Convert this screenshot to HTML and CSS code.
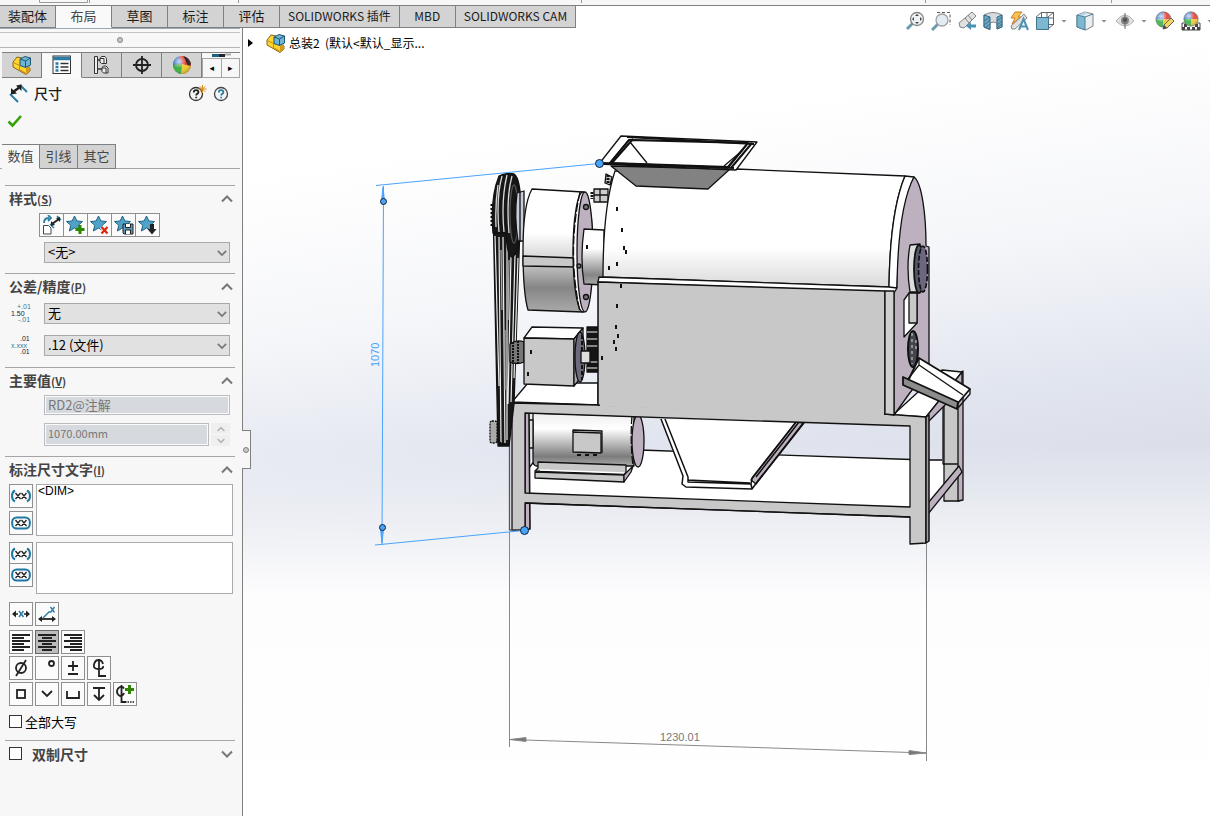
FILE: index.html
```html
<!DOCTYPE html>
<html lang="zh-CN">
<head>
<meta charset="utf-8">
<meta name="viewport" content="width=device-width, initial-scale=1">
<title>SOLIDWORKS - 总装2</title>
<link rel="stylesheet" href="styles.css">
</head>
<body>
<svg class="defs" width="0" height="0" aria-hidden="true">
  <defs>
    <symbol id="i-up" viewBox="0 0 12 8"><path d="M1 6.500 6 1.500l5 5" fill="none" stroke="#777" stroke-width="2"/></symbol>
    <symbol id="i-down" viewBox="0 0 12 8"><path d="M1 1.500 6 6.500l5-5" fill="none" stroke="#777" stroke-width="2"/></symbol>
    <symbol id="i-part" viewBox="0 0 20 20">
      <path d="M1 7l4-5 5 1v6l8 4v3l-4 3.500L1 12z" fill="#ffd42e" stroke="#8a6512"/>
      <path d="M1.500 7.500l6 3v4l6 3.500" fill="none" stroke="#c58e14"/>
      <path d="M14 13l4-2v5l-4 3z" fill="#d59a18"/>
      <path d="M8 4l5-2.500 5.500 1.500v7l-5 2.500L8 10.500z" fill="#6eb5d6" stroke="#1d5673"/>
      <path d="M8 4l5.500 2L18.500 3M13.500 6v6.500" fill="none" stroke="#1d5673"/>
    </symbol>
    <symbol id="i-star" viewBox="0 0 20 20"><path d="M8.500 1l2.400 5 5.600.5-4.200 3.800 1.300 5.700-5.100-3-5.100 3 1.300-5.700L.5 6.500 6.100 6z" fill="#4fa3c8" stroke="#1f5f80"/></symbol>
    <symbol id="i-paren" viewBox="0 0 20 20"><path d="M4 4.500Q1 6 1 10t3 5.500M16 4.500q3 1.500 3 5.500t-3 5.500" fill="none" stroke="#1f78a3" stroke-width="2"/><path d="M4.500 7l5 6m0-6l-5 6M10.500 7l5 6m0-6l-5 6" stroke="#222" stroke-width="1.300"/></symbol>
    <symbol id="i-oval" viewBox="0 0 20 20"><rect x="1.200" y="4.500" width="17.600" height="11" rx="4.500" fill="none" stroke="#1f78a3" stroke-width="2"/><path d="M4.500 7l5 6m0-6l-5 6M10.500 7l5 6m0-6l-5 6" stroke="#222" stroke-width="1.300"/></symbol>
    <radialGradient id="ballshade" cx=".35" cy=".3" r=".8"><stop offset="0" stop-color="#fff" stop-opacity=".75"/><stop offset=".5" stop-color="#fff" stop-opacity="0"/><stop offset="1" stop-color="#000" stop-opacity=".35"/></radialGradient>
    <symbol id="i-ball" viewBox="0 0 20 20">
      <path d="M10 10L1 10A9 9 0 0 1 10 1z" fill="#3874c8"/><path d="M10 10V1a9 9 0 0 1 9 9z" fill="#e23b33"/><path d="M10 10H1a9 9 0 0 0 9 9z" fill="#35b044"/><path d="M10 10h9a9 9 0 0 1-9 9z" fill="#f0c92c"/>
      <circle cx="10" cy="10" r="9" fill="url(#ballshade)" stroke="#5b5b5b" stroke-width=".7"/>
    </symbol>
  </defs>
</svg>

<div class="app">
  <div class="strip">
    <svg width="100%" height="5" aria-hidden="true"><path d="M39.500 0V2.500H87.500V0M89.500 0V3M238.500 0V3M581.500 0V3M925.500 0V3M1111.500 0V3" fill="none" stroke="#9a9a9a"/></svg>
  </div>

  <nav class="ribbon" aria-label="命令选项卡">
    <button>装配体</button><button class="on">布局</button><button>草图</button><button>标注</button><button>评估</button><button class="latin">SOLIDWORKS 插件</button><button class="latin">MBD</button><button class="latin">SOLIDWORKS CAM</button>
  </nav>

  <aside class="panel">
    <div class="grip"><span class="dot"></span></div>
    <div class="mgr">
      <button aria-label="设计树"><svg width="20" height="20"><use href="#i-part"/></svg></button>
      <button class="on" aria-label="属性"><svg width="20" height="20" viewBox="0 0 20 20"><rect x="1" y="1" width="17.500" height="17.500" fill="#fff" stroke="#333"/><path d="M1 3.500h17.500" stroke="#2b7da3" stroke-width="3.500"/><path d="M3.500 8.500h3M3.500 12h3M3.500 15.500h3" stroke="#2b7da3" stroke-width="2.400"/><path d="M8.500 8.500h8M8.500 12h8M8.500 15.500h8" stroke="#333" stroke-width="1.300"/></svg></button>
      <button aria-label="配置"><svg width="20" height="20" viewBox="0 0 20 20" fill="#eee" stroke="#333"><path d="M5 5h5M5 14h6" stroke-width="1.600"/><path d="M2.500 1.500h3v17h-3z"/><path d="M8 3.500l1.500-2H13l1.500 2v5H9.500L8 7zM10 13l1.500-2H14l2 2v5h-4.500L10 16.500z"/><path d="M8 3.500h4v5M10 13h4v5" fill="none"/></svg></button>
      <button aria-label="DimXpert"><svg width="20" height="20" viewBox="0 0 20 20" fill="none" stroke="#222" stroke-width="1.800"><circle cx="10" cy="10" r="6"/><path d="M10 1v18M1 10h18"/></svg></button>
      <button aria-label="外观"><svg width="20" height="20" viewBox="0 0 20 20"><circle cx="10" cy="10" r="9" fill="#e23b33"/><path d="M1 10a9 9 0 0 1 6-8.500L10 9z" fill="#3874c8"/><path d="M1 10l9-1-1 10A9 9 0 0 1 1 10z" fill="#35b044"/><path d="M10 9l9 2a9 9 0 0 1-10 8z" fill="#f0c92c"/><path d="M11 1q6 1 8 8-2 3-4 0-1-4-4-8z" fill="#222"/><circle cx="10" cy="10" r="9" fill="url(#ballshade)"/></svg></button>
      <div class="pager">
        <svg width="37" height="5" aria-hidden="true"><path d="M10 2.500h7" stroke="#1f5f80" stroke-width="3"/><path d="M17 2.500h6" stroke="#223" stroke-width="3"/><path d="M23 1.500h6" stroke="#aaa" stroke-width="2"/></svg>
        <div><button aria-label="上一个">◂</button><button aria-label="下一个">▸</button></div>
      </div>
    </div>

    <div class="title">
      <svg width="20" height="20" viewBox="0 0 20 20" fill="none"><path d="M1 11l8 8M11 2l7 7" stroke="#2b7da3" stroke-width="2"/><path d="M4 9l7-5" stroke="#222" stroke-width="2.500"/><path d="M2 11.500V5l6 5.500zM12.500 1.500V8L7 2.500z" fill="#222"/></svg>
      <h1>尺寸</h1>
      <button class="bare" aria-label="新增功能"><svg width="20" height="20" viewBox="0 0 20 20"><circle cx="9" cy="11" r="6.500" fill="#f4f4f4" stroke="#333" stroke-width="1.300"/><path d="M6.800 9.500q0-2.300 2.300-2.300t2.300 2q0 1-1.300 1.700-.9.500-.9 1.500M9.200 13.700v1.600" fill="none" stroke="#222" stroke-width="1.800"/><path d="M15.500 2v8M11.500 6h8M12.800 3.300l5.400 5.400M18.200 3.300l-5.400 5.400" stroke="#d98a1d"/></svg></button>
      <button class="bare" aria-label="帮助"><svg width="20" height="20" viewBox="0 0 20 20"><circle cx="10" cy="11" r="6.500" fill="#f4f4f4" stroke="#444" stroke-width="1.300"/><path d="M7.800 9.500q0-2.300 2.300-2.300t2.300 2q0 1-1.300 1.700-.9.500-.9 1.500M10.200 13.700v1.600" fill="none" stroke="#2b7da3" stroke-width="1.800"/></svg></button>
    </div>
    <div class="confirm"><button class="bare" aria-label="确定"><svg width="16" height="14" viewBox="0 0 16 14"><path d="M1.500 7.500l4 4L14 2" fill="none" stroke="#36a006" stroke-width="2.600"/></svg></button></div>
    <div class="subtabs"><button class="on">数值</button><button>引线</button><button>其它</button></div>

    <section>
      <h2><span>样式<small>(<u>S</u>)</small></span><svg width="12" height="8"><use href="#i-up"/></svg></h2>
      <div class="styles">
        <button aria-label="应用默认属性"><svg width="20" height="20" viewBox="0 0 20 20"><path d="M1.500 10.500h5l2.500 2.500v6H1.500z" fill="#fff" stroke="#444"/><path d="M2 8q0-5 5-5M6 0l3 3-3 3" fill="none" stroke="#2b7da3" stroke-width="1.800"/><path d="M8 9l4 4M15 1l4 4" stroke="#2b7da3" stroke-width="1.500"/><path d="M10 9l7-5" stroke="#222" stroke-width="2"/><path d="M9 11V6l4 4zM18 2v5l-4-4z" fill="#222"/></svg></button>
        <button aria-label="添加样式"><svg width="20" height="20" viewBox="0 0 20 20"><use href="#i-star"/><path d="M14 10v9M9.500 14.500h9" stroke="#2e8500" stroke-width="3"/></svg></button>
        <button aria-label="删除样式"><svg width="20" height="20" viewBox="0 0 20 20"><use href="#i-star"/><path d="M11.500 12l6 6.500m0-6.500l-6 6.500" stroke="#fff" stroke-width="4"/><path d="M11.500 12l6 6.500m0-6.500l-6 6.500" stroke="#dd2509" stroke-width="2.200"/></svg></button>
        <button aria-label="保存样式"><svg width="20" height="20" viewBox="0 0 20 20"><use href="#i-star"/><path d="M9 9h10v10H10l-1-1z" fill="#5f99b5" stroke="#222"/><path d="M11.500 9v3.500h5V9M11.500 19v-4h5v4" fill="#fff" stroke="#222"/></svg></button>
        <button aria-label="装入样式"><svg width="20" height="20" viewBox="0 0 20 20"><use href="#i-star"/><path d="M14 9v6" stroke="#222" stroke-width="4"/><path d="M9.500 14h9L14 19.500z" fill="#222"/></svg></button>
      </div>
      <div class="combo inset"><select aria-label="样式"><option>&lt;无&gt;</option></select><svg width="12" height="8"><use href="#i-down"/></svg></div>
    </section>

    <section class="tolerance">
      <h2><span>公差/精度<small>(<u>P</u>)</small></span><svg width="12" height="8"><use href="#i-up"/></svg></h2>
      <div class="field">
        <svg width="24" height="20" viewBox="0 0 24 20" class="tiny"><text x="8" y="6" class="b">+.01</text><text x="2" y="13">1.50</text><text x="9" y="19" class="b">-.01</text></svg>
        <div class="combo"><select aria-label="公差类型"><option>无</option></select><svg width="12" height="8"><use href="#i-down"/></svg></div>
      </div>
      <div class="field">
        <svg width="24" height="20" viewBox="0 0 24 20" class="tiny"><text x="11" y="6">.01</text><text x="2" y="13" class="b">x.xxx</text><text x="11" y="19">.01</text></svg>
        <div class="combo"><select aria-label="单位精度"><option>.12 (文件)</option></select><svg width="12" height="8"><use href="#i-down"/></svg></div>
      </div>
    </section>

    <section class="primary">
      <h2><span>主要值<small>(<u>V</u>)</small></span><svg width="12" height="8"><use href="#i-up"/></svg></h2>
      <input class="ro" aria-label="名称" value="RD2@注解" disabled>
      <div class="spin"><input class="ro" aria-label="尺寸值" value="1070.00mm" disabled>
        <div><button disabled aria-label="增加"><svg width="8" height="6" viewBox="0 0 12 8"><path d="M1 7l5-5 5 5" fill="none" stroke="#b5b5b5" stroke-width="2.500"/></svg></button><button disabled aria-label="减少"><svg width="8" height="6" viewBox="0 0 12 8"><path d="M1 1l5 5 5-5" fill="none" stroke="#b5b5b5" stroke-width="2.500"/></svg></button></div>
      </div>
    </section>

    <section class="dimtext">
      <h2><span>标注尺寸文字<small>(<u>I</u>)</small></span><svg width="12" height="8"><use href="#i-up"/></svg></h2>
      <div class="textrow"><div class="pair"><button aria-label="括号"><svg width="20" height="20"><use href="#i-paren"/></svg></button><button aria-label="检查尺寸"><svg width="20" height="20"><use href="#i-oval"/></svg></button></div><textarea aria-label="尺寸文字">&lt;DIM&gt;</textarea></div>
      <div class="textrow"><div class="pair tight"><button aria-label="下方括号"><svg width="20" height="20"><use href="#i-paren"/></svg></button><button aria-label="下方检查尺寸"><svg width="20" height="20"><use href="#i-oval"/></svg></button></div><textarea aria-label="下方文字"></textarea></div>
      <div class="tools">
        <div><button aria-label="居中尺寸"><svg width="20" height="20" viewBox="0 0 20 20"><path d="M1 10l4-3.500v7zM19 10l-4-3.500v7z" fill="#222"/><path d="M3 10h4M13 10h4" stroke="#222" stroke-width="1.600"/><path d="M8 7l4.500 6M12.500 7L8 13" stroke="#2b7da3" stroke-width="1.500"/></svg></button><button aria-label="等距文字"><svg width="20" height="20" viewBox="0 0 20 20"><path d="M1 15l4-3v6zM19 15l-4-3v6z" fill="#222"/><path d="M3 15h14" stroke="#222" stroke-width="1.800"/><path d="M6 14l6-6h2M13.500 3l4 5.500m0-5.500l-4 5.500" stroke="#2b7da3" stroke-width="1.400" fill="none"/></svg></button></div>
        <div><button aria-label="左对齐"><svg width="20" height="20" viewBox="0 0 20 20" stroke="#222" stroke-width="1.800"><path d="M1 3h18M1 6h12M1 9h18M1 12h12M1 15h18M1 18h12"/></svg></button><button class="down" aria-label="居中"><svg width="20" height="20" viewBox="0 0 20 20" stroke="#222" stroke-width="1.800"><path d="M1 3h18M5 6h10M1 9h18M5 12h10M1 15h18M5 18h10"/></svg></button><button aria-label="右对齐"><svg width="20" height="20" viewBox="0 0 20 20" stroke="#222" stroke-width="1.800"><path d="M1 3h18M7 6h12M1 9h18M7 12h12M1 15h18M7 18h12"/></svg></button></div>
        <div class="glyphs"><button aria-label="直径"><svg width="20" height="20" viewBox="0 0 20 20"><circle cx="10" cy="10" r="5"/><path d="M5 18L15 2"/></svg></button><button aria-label="度数"><svg width="20" height="20" viewBox="0 0 20 20"><circle cx="14.500" cy="5.500" r="2.500"/></svg></button><button aria-label="正负"><svg width="20" height="20" viewBox="0 0 20 20"><path d="M10 3v10M5 8h10M5 16h10"/></svg></button><button aria-label="中心线"><svg width="20" height="20" viewBox="0 0 20 20"><path d="M14 6q-1-4-4.500-4T5 6.500 9.500 11 14 8M10 1v17h7"/></svg></button></div>
        <div class="glyphs"><button aria-label="正方形"><svg width="20" height="20" viewBox="0 0 20 20"><rect x="6" y="6" width="8" height="8"/></svg></button><button aria-label="锥形沉孔"><svg width="20" height="20" viewBox="0 0 20 20"><path d="M5 7l5 5 5-5"/></svg></button><button aria-label="柱形沉孔"><svg width="20" height="20" viewBox="0 0 20 20"><path d="M4 7v7h12V7"/></svg></button><button aria-label="深度"><svg width="20" height="20" viewBox="0 0 20 20"><path d="M4 4h12M10 4v12M5 11l5 5 5-5"/></svg></button><button aria-label="更多符号"><svg width="20" height="20" viewBox="0 0 20 20"><path d="M9 4.500Q7.500 2 5 3 2 4.500 2 7.500T5 12q3 0 4-3M6.500 1v17h5"/><path d="M12.500 18h1.500m1 0h1.500m1 0h1.500" stroke-width="1.500"/><path d="M14.500 1v9M10 5.500h9" stroke="#2e8500" stroke-width="3"/></svg></button></div>
      </div>
      <label class="caps"><input type="checkbox">全部大写</label>
    </section>

    <section class="dual">
      <h2><label><input type="checkbox">双制尺寸</label><svg width="12" height="8"><use href="#i-down"/></svg></h2>
    </section>
  </aside>

  <main class="view">
    <svg class="model" viewBox="243 6 967 810" preserveAspectRatio="xMinYMin meet" role="img" aria-label="总装2">
      <defs>
        <linearGradient id="gdrum" x1="0" y1="170" x2="0" y2="288" gradientUnits="userSpaceOnUse"><stop offset=".66" stop-color="#fff"/><stop offset="1" stop-color="#d9d9d9"/></linearGradient>
        <linearGradient id="gbig" x1="0" y1="190" x2="0" y2="312" gradientUnits="userSpaceOnUse"><stop offset=".35" stop-color="#fff"/><stop offset=".55" stop-color="#d8d8d8"/><stop offset=".8" stop-color="#858585"/><stop offset="1" stop-color="#aaa"/></linearGradient>
        <linearGradient id="gout" x1="0" y1="229" x2="0" y2="285" gradientUnits="userSpaceOnUse"><stop offset=".35" stop-color="#fff"/><stop offset=".82" stop-color="#858585"/><stop offset="1" stop-color="#aaa"/></linearGradient>
        <linearGradient id="gmotor" x1="0" y1="413" x2="0" y2="466" gradientUnits="userSpaceOnUse"><stop offset="0" stop-color="#eee"/><stop offset=".3" stop-color="#fff"/><stop offset=".82" stop-color="#7c7c7c"/><stop offset="1" stop-color="#aaa"/></linearGradient>
      </defs>
      <g stroke="#111" stroke-width="1.300" stroke-linejoin="round">
        <!-- shelf -->
        <path d="M529 465l8-18 107 3 298 11 17 4-31 38-18 4-385-14z" fill="#fff" stroke="none"/>
        <path d="M640 450l271 9.500M929 460h13M529 468l6-8" fill="none"/>
        <!-- rear right leg and rails -->
        <path d="M944 394h15v107h-15z" fill="#c8c8c8"/>
        <path d="M958 376l5-5v129l-5 1z" fill="#bdb1c0"/>
        <path d="M943 400v64h15" fill="none"/>
        <path d="M928 503l31-37 3 6-34 42z" fill="#bdb1c0"/>
        <path d="M893 415l49-45 20 2-36 45z" fill="#fff"/>
        <path d="M926 417l36-45v16l-34 34z" fill="#bdb1c0"/>
        <!-- motor -->
        <path d="M533 413v48q0 4 3 5h98v-50z" fill="url(#gmotor)"/>
        <path d="M529 420h4v28h-4" fill="#ddd"/>
        <ellipse cx="638" cy="441" rx="6" ry="26" fill="#bdb1c0"/>
        <path d="M632 416q-2 25 1 50" fill="none" stroke-dasharray="8 2"/>
        <path d="M538 462l88 3v9l-91-3 3-3z" fill="#c8c8c8"/><path d="M535 472l89 3v7l-89-4z" fill="#c8c8c8"/><path d="M624 475l9-9-2 6-7 10z" fill="#bdb1c0"/>
        <path d="M540 470l84 3" stroke="#fff"/><path d="M573 432l28 1v20l-28-1z" fill="#c8c8c8"/><path d="M573 432v-2l29 1v22" fill="none"/><path d="M577 455h4m4 0h4m4 0h4" fill="none" stroke-width="2"/>
        <!-- discharge hopper -->
        <path d="M661 419l142 4-47 60-4 6-67-3-3-10z" fill="#fff" stroke="none"/>
        <path d="M796 422l8 1-48 61-5-4z" fill="#bdb1c0"/>
        <path d="M661 419l22 57-1 8 4 3 66 2 5-7 47-60M665 419l23 58v5l63 2 1-6 44-56M688 480l62 3M751 484l1 5M799 422l-43 55" fill="none" stroke-width="1.500"/>
        <!-- table and left leg -->
        <path d="M512 402l16-19h70v22z" fill="#fff"/>
        <path d="M525 413h4l1 116-5 1z" fill="#bdb1c0" stroke-width="1.600"/>
        <path d="M512 403l86 2 287 9 41 3v126l-16 1v-27l-385-14v27h-13zM525 413v80l385 14v-81z" fill="#c8c8c8" fill-rule="evenodd"/>
        <path d="M525 503l385 14" fill="none"/><path d="M509.500 402v128h15" fill="none" stroke="#555"/>
        <path d="M926 417l3-2v126l-3 2z" fill="#a89aab" stroke-width="1.500"/>
        <!-- belts and pulleys -->
        <path d="M493 206l27 20-6 178-5 42h-11z" fill="#181818"/>
        <path d="M499 237l2 206M503 237l2 206M507 240v200M511 254l-3 150M515 255l-4 147M518 258l-4 120M495 236l4 150" fill="none" stroke="#eee" stroke-width="1.200"/>
        <path d="M501 250l1 60M509 260l-1 60M505 330v60" fill="none" stroke="#aaa"/>
        <rect x="490" y="421" width="7" height="22" rx="2" fill="#aaa" stroke-dasharray="2 1"/><path d="M497 440q6 7 12 4" fill="none" stroke-width="2"/>
        <path d="M492 204v22" stroke-width="3" stroke-dasharray="2 2"/>
        <path d="M499 176q7-4 15-2c5 3 7 21 7 38 0 24-4 44-9 45q-5-1-6-24h-13q-3-35 6-57z" fill="#171717"/>
        <path d="M502 176q-6 22-3 56M507 175q-6 25-3 57M512 176q-6 22-3 57M498 185q-3 20-2 42" fill="none" stroke="#ddd"/>
        <ellipse cx="514" cy="214" rx="4" ry="29" fill="none" stroke="#555"/>
        <path d="M517 193l7-2v50h-6q-4-24-1-48z" fill="#c9ccd9"/><path d="M520 192v50" fill="none"/>
        <!-- main gear motor -->
        <path d="M532 189l51 3v120l-55-2q-5-17-5-60 0-45 9-61z" fill="url(#gbig)"/>
        <path d="M523 256l53 2v9l-53-1z" fill="#c8c8c8"/>
        <ellipse cx="583" cy="252" rx="10" ry="60" fill="#fff"/><ellipse cx="585" cy="252" rx="8" ry="60" fill="#bdb1c0"/>
        <path d="M580 192q-13 60 0 120" fill="none" stroke-dasharray="9 2"/>
        <g fill="#777"><circle cx="586" cy="207" r="2.500"/><circle cx="579" cy="266" r="2"/><circle cx="586" cy="297" r="2.500"/></g>
        <path d="M584 229l20 1v55l-20-1q-4-26 0-55z" fill="url(#gout)"/>
        <path d="M594 189h14v13h-14zM600 189v13M594 195h14M606 174l6 3-2 8-5-2z" fill="#ccc"/><path d="M592 192v7M608 175v8" stroke-width="3" stroke-dasharray="2 1"/>
        <!-- gearbox -->
        <path d="M510 344q7-5 14-2v20q-7 3-14 0z" fill="#777"/><path d="M513 342v22M518 341v22" stroke="#111" stroke-width="2" stroke-dasharray="2 1"/>
        <path d="M524 338l8-11 51 1-9 11z" fill="#fff"/><path d="M524 338l50 1v47l-50-2z" fill="#c8c8c8"/><path d="M574 339l9-11v47l-9 11z" fill="#aaa"/>
        <ellipse cx="580" cy="357" rx="5" ry="25" fill="#6d6a7c"/><path d="M582 335v45" stroke-dasharray="4 2" stroke-width="2"/>
        <rect x="587" y="327" width="11" height="45" fill="#151515"/><path d="M587 332h11M587 339h11M587 346h11M587 362h11M587 368h11" stroke="#aaa"/><rect x="581" y="351" width="9" height="12" fill="#ddd"/>
        <!-- drum and body -->
        <path d="M615 171l121-2 169 7q-15 35-16 111l-286-10q0-70 12-106z" fill="url(#gdrum)"/>
        <path d="M905 176l9 1q-14 30-17 110l-8 4V287q1-75 16-111z" fill="#fff"/>
        <path d="M914 177c8 6 12 38 12 69l3 1v121l-20 26-15 21V291l3-4q1-80 17-110z" fill="#bdb1c0"/>
        <path d="M599 277l290 10 8 1-3 5-9-1-287-10z" fill="#fff"/>
        <path d="M598 282l287 9v123l-287-9z" fill="#c8c8c8" stroke-width="1.500"/>
        <path d="M600 405l284 9" stroke="#c8c8c8" stroke-width="3"/>
        <path d="M885 291h9v124l-9-1z" fill="#cfcfcf"/>
        <!-- end plate bearings and port -->
        <path d="M910 245l10-1v48h-10q-4-25 0-47z" fill="#ddd"/><ellipse cx="919" cy="269" rx="5" ry="24" fill="#555866" stroke-width="1.800"/><ellipse cx="923" cy="269" rx="4.500" ry="23" fill="#6d6680" stroke-dasharray="5 2" stroke-width="1.700"/>
        <path d="M904 300l5-7h8v30l-13 14z" fill="#fff"/><path d="M909 293h8v30h-8z" fill="#c8c8c8"/>
        <ellipse cx="913" cy="349" rx="5" ry="18" fill="#44454f" stroke-width="2"/><path d="M912 333v31M916 340v12" stroke="#bbb" stroke-dasharray="3 3"/>
        <!-- chute -->
        <path d="M919 358l51 31-12 14-50-22z" fill="#fff" stroke-width="1.800"/><path d="M903 377l55 25-1 7-54-24z" fill="#8c8c8c" stroke-width="1.800"/><path d="M919 365l44 30M919 358v7l-11 14M958 408l12-14v-5" fill="none"/>
        <!-- feed hopper -->
        <path d="M611 166l25 20 72 3 22-20z" fill="#828282"/>
        <path d="M621 136l136 6-21 28-137-6zM629 140l-19 23 118 5 20-25z" fill="#fff" fill-rule="evenodd"/><path d="M629 140l119 3-20 24-118-4z" fill="#fff" stroke-width="2"/>
        <path d="M627 137l127 7M602 163l132 5M633 139l-22 25M752 143l-21 25" fill="none" stroke-width="2"/>
        <path d="M630 142l17 21M743 150l-19 16" fill="none"/>
        <path d="M617 207v4M622 228v4M624 246v4M626 250v4M617 262v4M609 266v4M621 284v4M617 304v4M616 325v4M618 334v4M614 340v4M616 347v4M602 356v4M587 245v4M531 350v4M528 372v4" stroke-width="2"/>
      </g>
      <g class="dim-grey"><path d="M509.500 532V747M926.500 544V761M509.500 739.500L926 753"/><path d="M510 739.500l16-2v4zM926 753l-17-2.500v4z"/><text x="660" y="741">1230.01</text></g>
      <g class="dim-blue"><path d="M376 185.500L599 163.500M383.500 186L382 545M375 545L524 530.500"/><path d="M383 187l1.500 14h-3zM382 543l-1.500-14h3z"/><g class="knobs"><circle cx="383.500" cy="201.500" r="3"/><circle cx="382.500" cy="527.500" r="3"/><circle cx="599.500" cy="163.500" r="4"/><circle cx="524.500" cy="530.500" r="4"/></g><text transform="translate(379 367) rotate(-90)">1070</text></g>
    </svg>

    <div class="overlay">
      <div class="tree"><span class="tri"></span><svg width="20" height="20"><use href="#i-part"/></svg><span>总装2&nbsp; (默认&lt;默认_显示...</span></div>
      <div class="hud">
        <button aria-label="整屏显示全图"><svg width="20" height="20" viewBox="0 0 20 20"><path d="M2 18l6-6" stroke="#5e8ea8" stroke-width="3"/><circle cx="12" cy="8" r="6.500" fill="#edf1f4" stroke="#777" stroke-width="1.300"/><path d="M12 3l2 2h-4zM12 13l2-2h-4zM7 8l2-2v4zM17 8l-2-2v4z" fill="#333"/></svg></button>
        <button aria-label="局部放大"><svg width="20" height="20" viewBox="0 0 20 20"><path d="M6 1.500h13V14" fill="none" stroke="#444" stroke-dasharray="3 2"/><path d="M1 19l6-6" stroke="#5e8ea8" stroke-width="3"/><circle cx="11" cy="9" r="6" fill="#e1ebf1" stroke="#999" stroke-width="1.300"/></svg></button>
        <button aria-label="上一视图"><svg width="20" height="20" viewBox="0 0 20 20"><path d="M2 12L15 1l4 4L7 17l-4-1z" fill="#ddd" stroke="#777"/><path d="M11 4l4 5M8 7l4 5" stroke="#777"/><path d="M9 15l5-4v2.500h5v3h-5V19z" fill="#3987ac"/></svg></button>
        <button aria-label="剖面视图"><svg width="20" height="20" viewBox="0 0 20 20"><path d="M1 4q9-5 18 0v12l-5 2v-6q-4-2-7 0v7l-6-3z" fill="#d4d7da" stroke="#777"/><path d="M1 4l6 2v12l-6-2zM14 6l5-2v12l-5 2z" fill="#5ba0c0" stroke="#1f5f80"/><path d="M1 10l6-4M1 14l6-5M2 17l5-4M14 10l5-4M14 14l5-4M14 17l5-4" stroke="#1f4f68" stroke-width=".8"/></svg></button>
        <button aria-label="动态注解视图"><svg width="20" height="20" viewBox="0 0 20 20"><path d="M6 1h7L9 6h3L3 13l3-6H2z" fill="#f5c23a" stroke="#cc6818"/><path d="M2 15L15 3l3 4L6 18H3z" fill="#ddd" stroke="#777"/><path d="M10 19l4.500-11L19 19M12 15.500h5" fill="none" stroke="#3987ac" stroke-width="2"/></svg></button>
        <button aria-label="视图定向"><svg width="20" height="20" viewBox="0 0 20 20"><path d="M6.500 1.500h12v12h-12zM12 1v12M6 7h12M1 6l6-5M13 6l6-5M13 18l6-5" fill="none" stroke="#555"/><path d="M1.500 6.500h12v12h-12z" fill="#6fb0cc" stroke="#2d6480"/></svg></button>
        <i></i>
        <button aria-label="显示样式"><svg width="20" height="20" viewBox="0 0 20 20"><path d="M2 4l8-3 8 2v12l-7 4-9-3z" fill="#e7edf0" stroke="#777"/><path d="M2 4l8 2v13l-8-3z" fill="#6fb0cc"/><path d="M2 4l8-3 3 1-6 3z" fill="#a9d2e4"/><path d="M2 4l8 2 8-3M10 6v13M2 4v12l8 3" fill="none" stroke="#39728d"/></svg></button>
        <i></i>
        <button aria-label="隐藏/显示项目"><svg width="20" height="20" viewBox="0 0 20 20"><path d="M1 10q9-12 18 0-9 10-18 0z" fill="#ddd" stroke="#aaa"/><circle cx="10" cy="9.500" r="4" fill="#777"/><circle cx="10" cy="9" r="2" fill="#333"/><path d="M10 2v16" stroke="#555"/></svg></button>
        <i></i>
        <button aria-label="编辑外观"><svg width="20" height="20" viewBox="0 0 20 20"><use href="#i-ball" width="17" height="17"/><path d="M8 18l1-4 7-7 3 3-7 7z" fill="#f2cf50" stroke="#555"/><path d="M8 18l1-4 3 3z" fill="#333"/></svg></button>
        <button aria-label="应用布景"><svg width="20" height="20" viewBox="0 0 20 20"><path d="M1 12h18v7H1z" fill="#fff" stroke="#333"/><path d="M3 13h3v3H3zM14 13h3v3h-3zM6 16h3v3H6zM11 16h3v3h-3zM16 16h3v3h-3zM1 16h3v3H1z" fill="#333"/><use href="#i-ball" x="2" width="16" height="16"/></svg></button>
        <i></i>
      </div>
    </div>
    <button class="splitter" aria-label="折叠面板"><span class="dot"></span></button>
  </main>
</div>
</body>
</html>
```
FILE: styles.css
```css
* { box-sizing: border-box; }
body { margin: 0; font: 13px/20px "Noto Sans CJK SC", sans-serif; color: #1b1b1b; background: #f7f7f7; }
button { font: inherit; color: inherit; padding: 0; border: 0; background: none; border-radius: 0; }
svg { display: block; flex: none; }
.defs { position: absolute; }

.app { min-height: 100vh; display: grid; grid-template-columns: 243px minmax(0, 1fr); grid-template-rows: auto auto 1fr; }
.strip { grid-column: 1 / 3; height: 6px; border-bottom: 1px solid #808080; overflow: hidden; }

.ribbon { grid-area: 2 / 1 / 3 / 3; justify-self: start; z-index: 1; display: flex; height: 22px; }
.ribbon button { min-width: 56px; padding: 0 8px 2px; line-height: 19px; background: #d3d3d3; border-right: 1px solid #808080; border-bottom: 1px solid #808080; white-space: nowrap; }
.ribbon .latin { font-size: 12px; }
.ribbon .on { background: #f9f9f9; border-bottom-color: #f9f9f9; color: #444; }

.panel { grid-area: 3 / 1; background: #f7f7f7; border-right: 1px solid #808080; padding-bottom: 24px; }
.grip { height: 20px; margin-right: 2px; border-top: 1px solid #96aab8; border-bottom: 1px solid #b4b4b4; display: grid; place-items: center; }
.grip::before { content: ""; grid-area: 1 / 1; place-self: start stretch; margin-top: 3px; border-top: 1px solid #c4c4c4; }
.grip .dot { grid-area: 1 / 1; margin-top: 4px; }
.dot { width: 6px; height: 6px; border: 1px solid #808080; border-radius: 50%; background: #c8c8c8; }

.mgr { display: flex; height: 26px; margin: 4px 2px 0; }
.mgr > button { width: 40px; display: grid; place-items: center; background: #d3d3d3; border: solid #808080; border-width: 1px 1px 1px 0; }
.mgr > .on { background: #f9f9f9; border-bottom-color: #f9f9f9; }
.pager { flex: 1; border-top: 1px solid #808080; }
.pager div { display: flex; }
.pager button { flex: 1; height: 20px; line-height: 18px; font-size: 9px; font-family: "DejaVu Sans", sans-serif; border: 1px solid #a5a5a5; background: #f7f7f7; color: #000; }
.pager button + button { border-left: 0; }

.title { display: flex; align-items: center; height: 32px; padding: 0 11px 2px 9px; }
.title h1 { margin: 0 auto 0 5px; font-size: 14px; font-weight: 500; line-height: 20px; }
.title .bare + .bare { margin-left: 4px; }
.confirm { height: 34px; padding: 3px 0 0 7px; }
.subtabs { display: flex; height: 25px; margin: 0 2px 16px 0; padding-left: 2px; border-bottom: 1px solid #a5a5a5; }
.subtabs button { width: 38px; height: 25px; padding-bottom: 2px; line-height: 20px; background: #d3d3d3; color: #444; border: solid #808080; border-width: 1px 1px 1px 0; }
.subtabs .on { background: #f7f7f7; border-bottom-color: #f7f7f7; }

section { margin: 0 7px 0 5px; border-top: 1px solid #a5a5a5; padding-bottom: 10px; }
h2 { display: flex; align-items: center; justify-content: space-between; height: 27px; margin: 0; padding: 0 2px 2px 4px; font-size: 14px; line-height: 20px; font-weight: 700; color: #444; }
h2 small { font-size: 11px; }
.styles { display: flex; margin: 0 0 5px 34px; }
.styles button, .pair button, .tools button { width: 24px; height: 24px; display: grid; place-items: center; border: 1px solid #8f8f8f; background: #fbfbfb; }
.styles button { width: 25px; margin-right: -1px; }

.combo { display: grid; flex: 1; min-width: 0; margin-right: 5px; align-items: center; }
.combo > * { grid-area: 1 / 1; }
.combo > svg { justify-self: end; margin-right: 3px; width: 10px; pointer-events: none; }
.inset { margin-left: 39px; }
select { appearance: none; width: 100%; height: 21px; padding: 0 16px 2px 3px; border: 1px solid #a9a9a9; border-radius: 0; background: #e1e1e1; font: inherit; line-height: 18px; color: #000; }
.field { display: flex; margin-bottom: 11px; }
.field > svg { margin: 0 11px 0 4px; }
.tolerance { padding: 0; }
.tolerance h2 { margin-bottom: 2px; }
.tiny text { font: 7px "Liberation Sans", Arial, sans-serif; fill: #222; }
.tiny .b { fill: #2b7da3; }

.ro { display: block; width: 186px; height: 20px; margin-left: 39px; padding: 0 3px 2px; font: inherit; line-height: 14px; border: 1px solid #b9bcc0; border-radius: 0; outline: 1px solid #fafafa; outline-offset: -2px; background: #d6d9de; color: #777; }
.spin { display: flex; gap: 2px; margin: 8px 5px 0 39px; }
.spin .ro { flex: 1; min-width: 0; height: 23px; margin: 0; padding-bottom: 4px; font-size: 11px; }
.spin div { display: grid; width: 19px; gap: 1px; }
.spin button { display: grid; place-items: center; background: #efefef; }

.dimtext { padding-bottom: 12px; }
.textrow { display: flex; gap: 3px; margin: 0 2px 6px 4px; }
.pair { display: flex; flex-direction: column; gap: 3px; }
.tight { gap: 0; }
.tight button + button { margin-top: -3px; }
textarea { flex: 1; min-width: 0; height: 52px; padding: 0 1px; border: 1px solid #a9a9b0; border-radius: 0; background: #fff; resize: none; font: 12px/13px "Liberation Sans", Arial, sans-serif; color: #000; }
.tools { margin: 8px 0 9px 4px; display: grid; gap: 2px; }
.tools div { display: flex; gap: 2px; }
.tools div:first-child { margin-bottom: 2px; }
.tools .down { background: #bdbdbd; border-color: #666; }
.glyphs svg { fill: none; stroke: #222; stroke-width: 1.8px; }
input[type="checkbox"] { appearance: none; flex: none; width: 13px; height: 13px; margin: 0; border: 1px solid #333; background: #fff; }
.caps { display: flex; align-items: center; gap: 3px; height: 13px; margin-left: 4px; line-height: 18px; color: #000; }
.dual label { display: flex; align-items: center; gap: 10px; }

.view { grid-area: 2 / 2 / 4 / 3; position: relative; display: grid; background: linear-gradient(180deg, transparent 54%, #f1f2f6 66%, #fdfdfe 73%, #fff 100%), linear-gradient(172deg, #fff 18%, #f5f6f9 36%, #e1e5ef 52%, #dcdfea 60%); overflow: clip; overflow-clip-margin: 2px; }
.model { grid-area: 1 / 1; width: 100%; height: 100%; }
.overlay { grid-area: 1 / 1; display: flex; justify-content: space-between; align-items: flex-start; min-width: 0; overflow: hidden; }
.tree { display: flex; align-items: center; margin: 27px 0 0 5px; font-size: 12px; color: #000; white-space: nowrap; }
.tree svg { margin: 0 3px 0 13px; }
.tri { border: 4px solid transparent; border-left: 5px solid #000; border-right: 0; }
.hud { display: flex; align-items: center; gap: 6px; margin: 5px -5px 0 0; }
.hud button { opacity: .9; }
.hud i { width: 8px; height: 3px; background: #888; clip-path: polygon(0 0, 6px 0, 3px 3px); }

.dim-grey { fill: #777; stroke: #888; }
.dim-blue { fill: #4aa3fb; stroke: #4aa3fb; }
.dim-grey text, .dim-blue text { stroke: none; font: 11px "Liberation Sans", Arial, sans-serif; }
.knobs { stroke: #123; }

.splitter { position: absolute; left: -1px; top: 424px; width: 9px; height: 39px; display: grid; place-items: center; background: #f7f7f7; border: 1px solid #808080; border-left: 0; }
```
